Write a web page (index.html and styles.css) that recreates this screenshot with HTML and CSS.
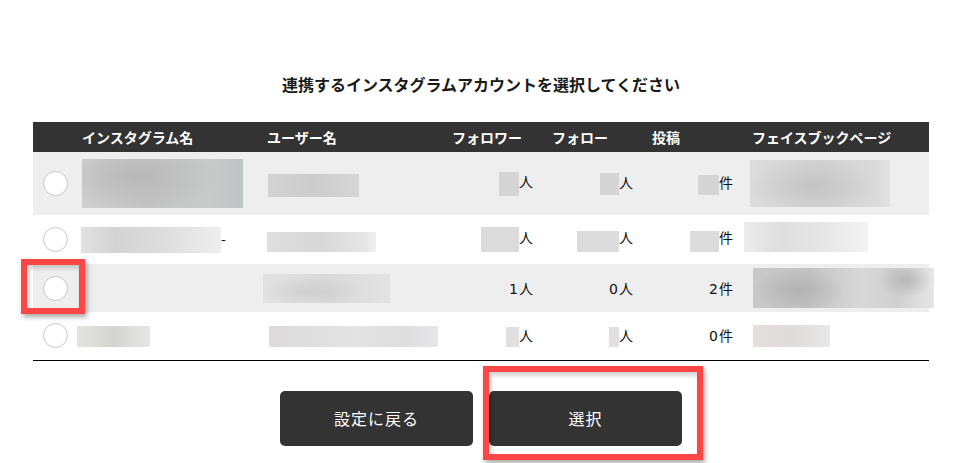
FILE: index.html
```html
<!DOCTYPE html>
<html lang="ja">
<head>
<meta charset="utf-8">
<title>インスタグラムアカウント選択</title>
<link rel="stylesheet" href="styles.css">
</head>
<body>
<main class="page">
  <h1 class="title">連携するインスタグラムアカウントを選択してください</h1>
  <table class="accounts">
    <colgroup>
      <col class="c-radio"><col class="c-name"><col class="c-user"><col class="c-num"><col class="c-num"><col class="c-num"><col class="c-fb">
    </colgroup>
    <thead>
      <tr>
        <th></th>
        <th>インスタグラム名</th>
        <th>ユーザー名</th>
        <th>フォロワー</th>
        <th>フォロー</th>
        <th>投稿</th>
        <th>フェイスブックページ</th>
      </tr>
    </thead>
    <tbody>
      <tr class="r1 shaded">
        <td class="radio-cell"><span class="radio"></span></td>
        <td><span class="blur b-a" style="width:161px;height:49px;margin-left:1px"></span></td>
        <td><span class="blur b-b" style="width:91px;height:23px;margin-left:2px;margin-top:4px"></span></td>
        <td class="num"><span class="blur b-s" style="width:20px;height:24px"></span>人</td>
        <td class="num"><span class="blur b-s" style="width:19px;height:22px"></span>人</td>
        <td class="num"><span class="blur b-s" style="width:21px;height:20px"></span>件</td>
        <td><span class="blur b-c" style="width:140px;height:47px;margin-left:-1px"></span></td>
      </tr>
      <tr class="r2">
        <td class="radio-cell"><span class="radio"></span></td>
        <td><span class="blur b-d" style="width:140px;height:26px"></span>-</td>
        <td><span class="blur b-e" style="width:109px;height:20px;margin-left:1px;margin-top:4px"></span></td>
        <td class="num"><span class="blur b-s2" style="width:38px;height:25px"></span>人</td>
        <td class="num"><span class="blur b-s2" style="width:42px;height:21px;margin-top:4px"></span>人</td>
        <td class="num"><span class="blur b-s2" style="width:29px;height:21px;margin-top:4px"></span>件</td>
        <td><span class="blur b-f" style="width:124px;height:30px;margin-left:-7px;margin-top:-6px"></span></td>
      </tr>
      <tr class="r3 shaded">
        <td class="radio-cell"><span class="radio"></span></td>
        <td></td>
        <td><span class="blur b-g" style="width:127px;height:29px;margin-left:-3px"></span></td>
        <td class="num"><span class="n">1</span>人</td>
        <td class="num"><span class="n">0</span>人</td>
        <td class="num"><span class="n">2</span>件</td>
        <td><span class="blur b-h" style="width:181px;height:40px;margin-left:2px"></span></td>
      </tr>
      <tr class="r4">
        <td class="radio-cell"><span class="radio"></span></td>
        <td><span class="blur b-i" style="width:73px;height:21px;margin-left:-4px"></span></td>
        <td><span class="blur b-j" style="width:169px;height:21px;margin-left:3px"></span></td>
        <td class="num"><span class="blur b-s3" style="width:13px;height:20px"></span>人</td>
        <td class="num"><span class="blur b-s3" style="width:10px;height:20px"></span>人</td>
        <td class="num"><span class="n">0</span>件</td>
        <td><span class="blur b-k" style="width:77px;height:22px;margin-left:2px"></span></td>
      </tr>
    </tbody>
  </table>
  <div class="actions">
    <button class="btn" type="button">設定に戻る</button>
    <button class="btn" type="button">選択</button>
  </div>
  <div class="mark mark-radio"></div>
  <div class="mark mark-button"></div>
</main>
</body>
</html>
```
FILE: styles.css
```css
* { box-sizing: border-box; }
html, body { margin: 0; padding: 0; background: #fff; }
body {
  font-family: "Noto Sans CJK JP", "Noto Sans", sans-serif;
  color: #222;
}
.page {
  position: relative;
  width: 962px;
  height: 463px;
  overflow: hidden;
  padding-top: 72px;
}
.title {
  margin: 0;
  text-align: center;
  font-size: 16px;
  line-height: 24px;
  font-weight: 700;
  color: #1a1a1a;
}
.accounts {
  margin: 26px auto 0;
  width: 896px;
  table-layout: fixed;
  border-collapse: collapse;
  font-size: 14px;
  border-bottom: 1px solid #000;
}
.c-radio { width: 42px; }
.c-name { width: 185px; }
.c-user { width: 185px; }
.c-num { width: 100px; }
.c-fb { width: 184px; }
.accounts thead tr { background: #333; height: 30px; }
.accounts th {
  color: #fff;
  font-weight: 700;
  text-align: left;
  padding: 0 0 0 7px;
  white-space: nowrap;
  line-height: 30px;
}
.accounts td {
  padding: 0 0 0 6px;
  vertical-align: middle;
  white-space: nowrap;
  color: #111;
  line-height: 20px;
}
.accounts tr.shaded { background: #eee; }
.r1 { height: 63px; }
.r2 { height: 49px; }
.r3 { height: 48px; }
.r4 { height: 48px; }
.accounts td.radio-cell { padding: 0 0 0 10px; }
.radio {
  display: block;
  width: 25px;
  height: 25px;
  border-radius: 50%;
  border: 1px solid #c8c8c8;
  background: #fff;
}
.accounts td.num { text-align: right; padding: 0 12px 0 0; }
.n {
  font-family: "DejaVu Sans", "Noto Sans", sans-serif;
  letter-spacing: 1px;
}
.blur {
  display: inline-block;
  vertical-align: middle;
  filter: blur(0.6px);
}
.b-a { background: radial-gradient(ellipse 50% 70% at 35% 35%, #b9b9b9, transparent), linear-gradient(90deg, #cfcfcf, #c4c4c4 40%, #c9cbcb 80%, #bfc3c3); }
.b-b { background: linear-gradient(90deg, #d3d3d3, #cbcccb 50%, #d6d6d6); }
.b-c { background: radial-gradient(ellipse 45% 60% at 45% 55%, #c5c5c5, transparent), linear-gradient(90deg, #dcdcdc, #d2d2d2 50%, #dadada 90%, #e2e2e2); }
.b-s { background: #d5d5d5; }
.b-s2 { background: #dcdcdc; }
.b-s3 { background: #e0e0e0; }
.b-d { background: linear-gradient(90deg, #e2e2e2, #d3d3d3 25%, #dedede 60%, #eeeeee); }
.b-e { background: linear-gradient(90deg, #dedede, #d8d8d8 50%, #e6e6e6 90%, #f0f0f0); }
.b-f { background: linear-gradient(90deg, #ececec, #dedede 30%, #e8e8e8 70%, #f3f3f3); }
.b-g { background: radial-gradient(ellipse 40% 50% at 40% 60%, #cfcfcf, transparent), linear-gradient(90deg, #e2e2e2, #d9d9d9 50%, #e3e3e3); }
.b-h { background: radial-gradient(ellipse 25% 55% at 25% 55%, #b3b3b3, transparent), radial-gradient(ellipse 15% 45% at 84% 30%, #b8b8b8, transparent), linear-gradient(90deg, #c9c9c9, #c3c3c3 30%, #d8d8d8 60%, #d0d0d0 80%, #e6e6e6); }
.b-i { background: linear-gradient(90deg, #e3e3df, #d4d4d2 50%, #e6e6e6); }
.b-j { background: linear-gradient(90deg, #dcdadb, #e3e3e3 50%, #dedede 80%, #e6e6ea); }
.b-k { background: linear-gradient(90deg, #e2dfdd, #dedcdb 50%, #e8e8e8); }
.actions {
  display: flex;
  justify-content: center;
  gap: 16px;
  margin-top: 30px;
}
.btn {
  width: 193px;
  height: 55px;
  border: none;
  border-radius: 5px;
  background: #333;
  color: #fff;
  font-family: "Noto Sans CJK JP", "Noto Sans", sans-serif;
  font-size: 16px;
  letter-spacing: 1px;
}
.mark {
  position: absolute;
  border: 6px solid #fd4646;
  box-shadow: 2px 3px 5px rgba(0,0,0,0.35), inset 2px 3px 5px rgba(0,0,0,0.2);
}
.mark-radio { left: 21px; top: 259px; width: 64px; height: 55px; }
.mark-button { left: 483px; top: 366px; width: 220px; height: 94px; }
```
